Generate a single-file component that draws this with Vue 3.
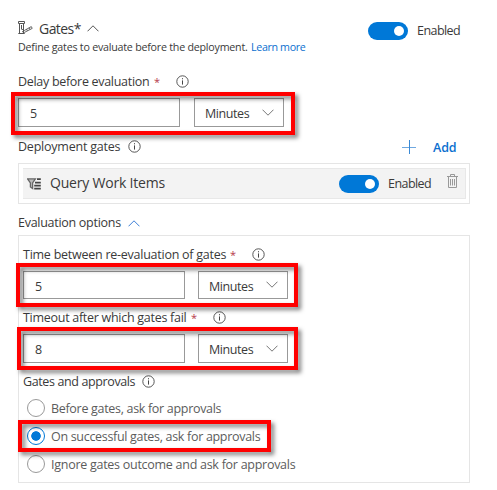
<script setup>
import { ref, h } from 'vue'

const approval = ref(1)
const approvals = [
  'Before gates, ask for approvals',
  'On successful gates, ask for approvals',
  'Ignore gates outcome and ask for approvals',
]

const InfoIcon = () =>
  h('svg', { width: 13, height: 13, viewBox: '0 0 13 13', fill: 'none', stroke: '#444' }, [
    h('circle', { cx: 6.5, cy: 6.5, r: 5.7, 'stroke-width': 0.9 }),
    h('path', { d: 'M6.5 5.4V9.6M6.5 3.2V4.3', 'stroke-width': 1 }),
  ])

const Chevron = (props) =>
  h('svg', { width: 12, height: 7, viewBox: '0 0 12 7', fill: 'none', stroke: props.color }, [
    h('path', { d: props.up ? 'M.5 6.3 6 .8 11.5 6.3' : 'M.5 .7 6 6.2 11.5 .7', 'stroke-width': 1 }),
  ])
Chevron.props = { up: Boolean, color: String }
</script>

<template>
  <main class="page">
    <header class="head">
      <div class="intro">
        <div class="title">
          <svg class="gate" width="15" height="14" viewBox="0 0 15 14" fill="none" stroke="#555">
            <path d="M.5 .5H6.5V2.5H.5ZM1.5 2.5V12.5M5.5 2.5V12.5M.3 12.5H6.7M3.5 4V8.5" />
            <path d="M4 8.2 6.2 9.6 13.3 5.6 14.2 7.4 6.5 11.4 4 10.5M8.5 8.2 9.4 9.8M11 6.9 11.9 8.5" stroke-width=".9" />
          </svg>
          <span class="gates">Gates*</span>
          <Chevron up color="#555" />
        </div>
        <p class="desc"><span class="define">Define gates to evaluate before the deployment.</span> <a class="learn">Learn more</a></p>
      </div>
      <div class="toggle"><i></i></div>
      <span class="enabled">Enabled</span>
    </header>

    <div class="label delay"><span class="t-delay">Delay before evaluation</span><b>*</b><InfoIcon /></div>
    <div class="fields first">
      <div class="input">5</div>
      <div class="select"><span>Minutes</span><Chevron color="#777" /></div>
      <div class="mark m1"></div>
    </div>

    <div class="label deploy">
      <span class="t-deploy">Deployment gates</span><InfoIcon />
      <svg class="plus" width="14" height="14" viewBox="0 0 14 14" fill="none">
        <path d="M0 7.5H14" stroke="#6fa8e0" /><path d="M7.5 0V14" stroke="#3a8ad6" />
      </svg>
      <span class="add">Add</span>
    </div>

    <section class="gate-list">
      <div class="gate-row">
        <svg class="query" width="14" height="12" viewBox="0 0 14 12">
          <path d="M.6 .9H8.4L5.6 5V10.5L3.4 9V5Z" fill="#bbb" stroke="#666" stroke-width="1.3" />
          <path d="M10 1.2H13.8M8 4.6H13.8M7.2 7.6H13.8M7.2 10.6H13.8" stroke="#444" stroke-width="1.8" />
        </svg>
        <span class="t-query">Query Work Items</span>
        <div class="toggle"><i></i></div>
        <span class="enabled">Enabled</span>
        <svg class="trash" width="11" height="14" viewBox="0 0 11 14" fill="none" stroke="#999">
          <path d="M0 2.5H11M3.5 2.5V.5H7.5V2.5M1.5 2.5V13.5H9.5V2.5M3.5 5V11.5M5.5 5V11.5M7.5 5V11.5" />
        </svg>
      </div>
    </section>

    <div class="label evaluation"><span class="t-eval">Evaluation options</span><Chevron up color="#3d7fd6" /></div>

    <section class="options">
      <div class="label time"><span class="t-time">Time between re-evaluation of gates</span><b>*</b><InfoIcon /></div>
      <div class="fields second">
        <div class="input">5</div>
        <div class="select"><span>Minutes</span><Chevron color="#777" /></div>
        <div class="mark m2"></div>
      </div>
      <div class="label timeout"><span class="t-timeout">Timeout after which gates fail</span><b>*</b><InfoIcon /></div>
      <div class="fields third">
        <div class="input">8</div>
        <div class="select"><span>Minutes</span><Chevron color="#777" /></div>
        <div class="mark m3"></div>
      </div>
      <div class="label approvals"><span class="t-appr">Gates and approvals</span><InfoIcon /></div>
      <div v-for="(text, i) in approvals" :key="i" class="radio" :class="{ on: approval === i }" @click="approval = i">
        <i class="dot"></i><span :class="'r' + i">{{ text }}</span>
        <div v-if="i === 1" class="mark m4"></div>
      </div>
    </section>
  </main>
</template>

<style>
body { margin: 0; background: #fff; }
</style>

<style scoped>
* { box-sizing: border-box; }
.page { width: 497px; height: 490px; padding: 18px 27px 0 18px; font-family: "Open Sans", "Noto Sans", sans-serif; font-size: 12.5px; color: #3a3a3a; white-space: nowrap; overflow: hidden; }
svg { flex: none; display: block; }
.head { display: flex; height: 54px; }
.intro { width: 350px; }
.title { display: flex; align-items: center; height: 20px; }
.gates { width: 41px; margin: 0 7px 0 6px; font-size: 14px; letter-spacing: -0.55px; }
.desc { display: flex; gap: 4px; margin: 0; height: 18px; line-height: 18px; font-size: 10.7px; }
.define { width: 229px; letter-spacing: -0.23px; }
.learn { color: #0b6fcf; letter-spacing: -0.35px; }
.toggle { flex: none; width: 40px; height: 18px; margin-top: 4px; border-radius: 9px; background: #0078d7; display: flex; align-items: center; justify-content: flex-end; padding-right: 4px; }
.toggle i { width: 10px; height: 10px; border-radius: 50%; background: #fff; }
.enabled { margin: 4px 0 0 9px; line-height: 18px; letter-spacing: -0.55px; }
.label { display: flex; align-items: center; height: 20px; }
.label > span { position: relative; top: -1px; }
.label b { color: #b5394a; font-weight: 400; font-size: 11px; width: 5px; margin: -1px 17px 0 5px; }
.label svg { position: relative; top: -0.5px; }
.t-delay { width: 131px; letter-spacing: -0.3px; }
.fields { position: relative; display: flex; gap: 14px; height: 29px; }
.input, .select { border: 1px solid #999; background: #fff; display: flex; align-items: center; }
.input { width: 162px; padding: 2px 0 0 11px; }
.select { width: 90px; padding: 2px 9px 0 10px; justify-content: space-between; letter-spacing: -0.42px; }
.select svg { margin-top: -3px; }
.first { margin-top: 6px; }
.mark { position: absolute; border: 4px solid #f00; filter: drop-shadow(3px 3px 2px rgba(0, 0, 0, .5)); pointer-events: none; z-index: 2; }
.m1 { left: -7px; top: -6px; width: 284px; height: 43px; }
.deploy { margin-top: 10px; height: 20px; }
.t-deploy { width: 102px; margin-right: 8px; letter-spacing: -0.22px; }
.plus { margin-left: 261px; }
.label > .add { top: 0; margin-left: 17px; color: #0b6fcf; font-weight: 600; letter-spacing: -0.1px; }
.gate-list { margin-top: 6px; height: 41px; border: 1px solid #e5e5e5; padding: 4px 3px 4px 4px; }
.gate-row { display: flex; align-items: center; height: 31px; background: #f3f3f3; border: solid #e8e8e8; border-width: 1px 1px 1px 0; padding-left: 4px; }
.t-query { width: 116px; margin: -2px 173px 0 9px; font-size: 14px; letter-spacing: -0.2px; }
.gate-row .toggle { margin-top: 0; }
.gate-row .enabled { margin-top: 0; width: 45px; }
.trash { margin: -5px 0 0 14px; }
.evaluation { margin-top: 9px; }
.t-eval { width: 103px; margin-right: 7px; letter-spacing: -0.28px; }
.evaluation svg { margin-top: 2px; }
.options { margin-top: 2px; height: 248px; border: 1px solid #e5e5e5; padding: 9px 0 0 4px; }
.t-time { width: 202px; letter-spacing: -0.25px; }
.second { margin-top: 6px; height: 28px; gap: 13px; }
.third { margin-top: 6px; gap: 13px; }
.timeout { margin-top: 9px; }
.t-timeout { width: 163px; letter-spacing: -0.28px; }
.m2 { left: -7px; top: -8px; width: 282px; height: 44px; }
.m3 { left: -6px; top: -7px; width: 281px; height: 43px; }
.approvals { margin-top: 9px; height: 20px; margin-bottom: 2px; }
.t-appr { width: 112px; margin-right: 7px; letter-spacing: -0.38px; }
.radio { position: relative; display: flex; align-items: center; height: 28px; padding-left: 4px; color: #5c5c5c; letter-spacing: -0.31px; }
.r2 { letter-spacing: -0.27px; }
.dot { flex: none; width: 18px; height: 18px; border: 1px solid #999; border-radius: 50%; margin-right: 6px; }
.on .dot { border-color: #0078d7; background: radial-gradient(circle, #0078d7 4.4px, transparent 5.1px); }
.m4 { left: -5px; top: -2px; width: 253px; height: 32px; }
</style>
